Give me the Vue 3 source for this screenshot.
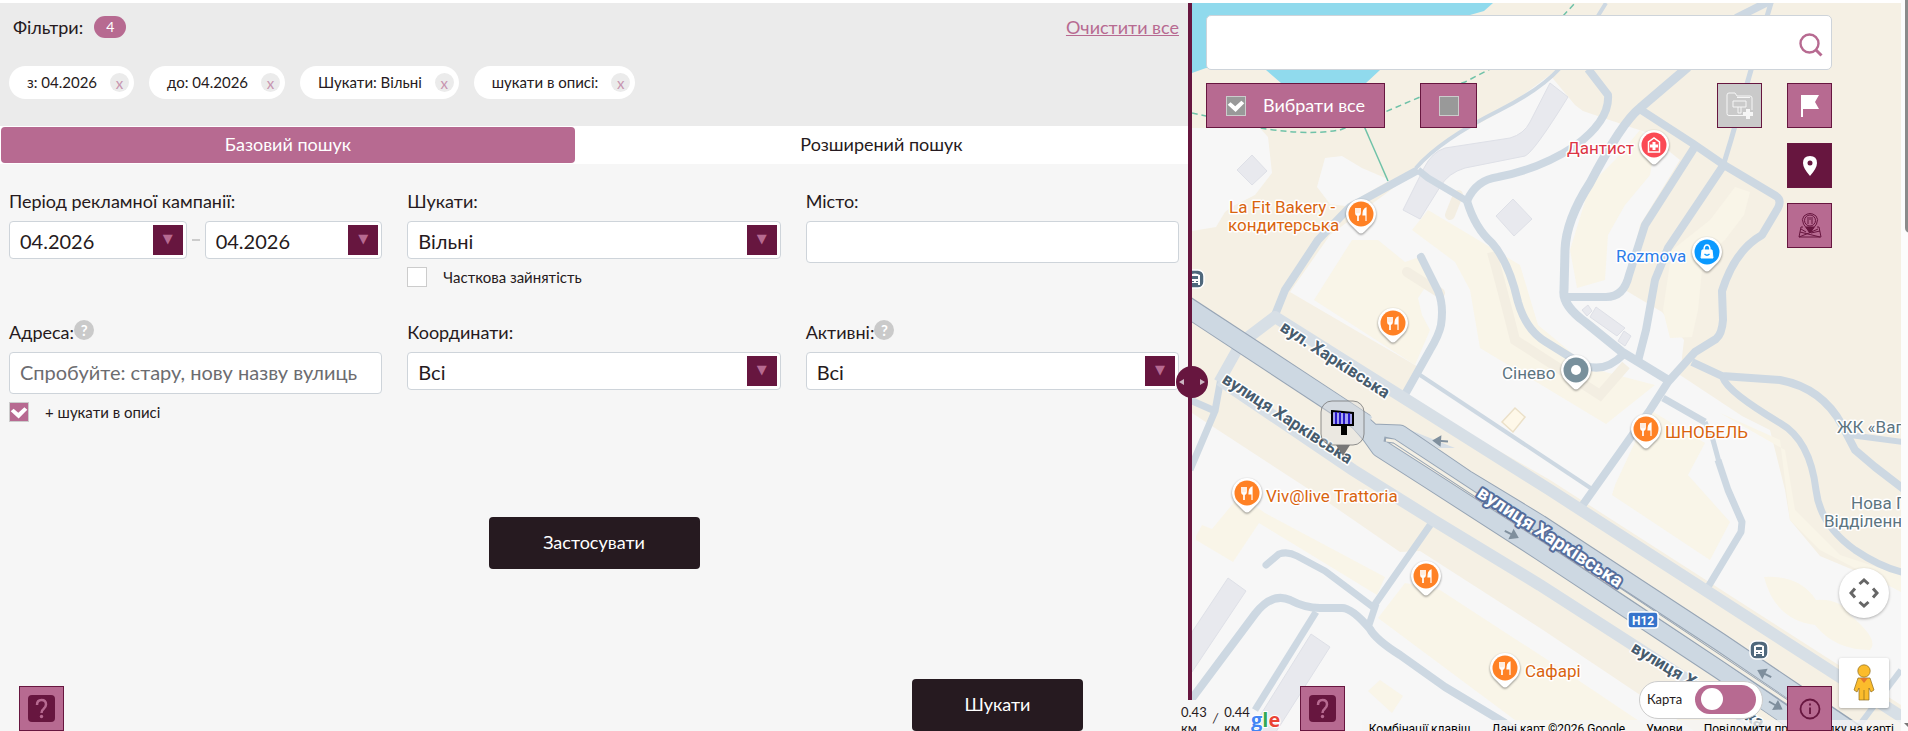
<script setup>
import { ref } from 'vue'

const chips = ref(['з: 04.2026', 'до: 04.2026', 'Шукати: Вільні', 'шукати в описі:'])
const tab = ref('basic')
const dateFrom = ref('04.2026')
const dateTo = ref('04.2026')
const status = ref('Вільні')
const partial = ref(false)
const city = ref('')
const address = ref('')
const inDescription = ref(true)
const coords = ref('Всі')
const active = ref('Всі')
const allChecked = ref(true)
const noneChecked = ref(false)
const mapSearch = ref('')
const mapOn = ref(false)

const roads = [
  { w: 8, d: 'M1275 315L1285 290L1318 240L1350 207L1418 170' },
  { w: 7, d: 'M1418 170L1428 178L1467 201' },
  { w: 8, d: 'M1467 201Q1476 180 1498 177Q1540 169 1575 146Q1610 120 1608 95L1588 69' },
  { w: 8, d: 'M1467 201Q1475 228 1492 243Q1509 262 1518 302Q1526 330 1546 342L1575 360Q1600 378 1624 354' },
  { w: 4, d: 'M1416 168Q1440 140 1500 110Q1540 90 1560 68L1580 45L1606 3' },
  { w: 8, cap: 'round', d: 'M1421 257L1438 291Q1444 305 1441 325Q1439 335 1430 350L1403 398' },
  { w: 4, d: 'M1420 375L1592 489' },
  { w: 9, d: 'M1688 67L1640 108Q1622 122 1590 183Q1566 220 1565 250L1564 290Q1562 305 1585 322L1622 352L1668 380' },
  { w: 8, d: 'M1638 108L1692 143L1724 165L1776 196Q1782 200 1778 208L1762 235Q1735 250 1722 291L1723 320Q1722 334 1716 339L1695 352L1668 382L1650 410L1582 506' },
  { w: 8, d: 'M1696 145L1645 225L1629 275Q1624 297 1606 297L1565 297' },
  { w: 8, d: 'M1725 163L1668 248L1655 280L1646 330L1638 361' },
  { w: 5, d: 'M1724 163L1731 140L1751 70L1771 3' },
  { w: 8, d: 'M1736 18L1772 0' },
  { w: 8, d: 'M1692 362L1722 376L1780 380Q1822 388 1842 425L1855 450L1875 467L1905 490' },
  { w: 6, d: 'M1850 435L1903 442' },
  { w: 7, d: 'M1723 378Q1728 392 1780 423Q1810 440 1816 490Q1820 525 1855 550Q1880 567 1905 573' },
  { w: 7, d: 'M1663 398L1705 422' },
  { w: 5, d: 'M1705 422L1713 440L1719 462' },
  { w: 7, d: 'M1718 460L1728 490L1742 522L1741 532L1705 592' },
  { w: 7, cap: 'round', d: 'M1266 565L1279 554Q1288 551 1297 556L1325 571L1373 607L1433 521' },
  { w: 7, d: 'M1376 604L1368 628' },
  { w: 8, d: 'M1190 701L1255 614Q1272 592 1290 600Q1305 608 1320 608L1342 608Q1352 608 1370 629Q1376 640 1400 655L1445 687L1505 723L1520 735' },
  { w: 7, d: 'M1316 612L1255 710' },
  { w: 7, d: 'M1190 400L1215 411' },
  { w: 7, d: 'M1221 378L1215 411L1190 470' },
  { w: 6, d: 'M1855 731L1901 670' }
]

const pins = [
  { x: 1361, y: 214, c: '#ff8125', t: 'food' },
  { x: 1393, y: 323, c: '#ff8125', t: 'food' },
  { x: 1646, y: 429, c: '#ff8125', t: 'food' },
  { x: 1247, y: 493, c: '#ff8125', t: 'food' },
  { x: 1426, y: 576, c: '#ff8125', t: 'food' },
  { x: 1505, y: 668, c: '#ff8125', t: 'food' },
  { x: 1654, y: 145, c: '#fb4a55', t: 'health' },
  { x: 1707, y: 252, c: '#0a99ff', t: 'shop' },
  { x: 1576, y: 370, c: '#78909c', t: 'dot' }
]

const labels = [
  { x: 1229, y: 213, k: 'food', s: 'La Fit Bakery -' },
  { x: 1228, y: 231, k: 'food', s: 'кондитерська' },
  { x: 1567, y: 154, k: 'health', s: 'Дантист' },
  { x: 1616, y: 262, k: 'shop', s: 'Rozmova' },
  { x: 1502, y: 379, k: 'place', s: 'Сінево' },
  { x: 1665, y: 438, k: 'food', s: 'ШНОБЕЛЬ' },
  { x: 1266, y: 502, k: 'food', s: 'Viv@live Trattoria' },
  { x: 1525, y: 677, k: 'food', s: 'Сафарі' },
  { x: 1837, y: 433, k: 'place', s: 'ЖК «Ваг' },
  { x: 1851, y: 509, k: 'place', s: 'Нова П' },
  { x: 1824, y: 527, k: 'place', s: 'Відділенн' }
]

const arrows = [
  { x: 1441, y: 441, r: 184 },
  { x: 1511, y: 534, r: 27 },
  { x: 1765, y: 674, r: 207 },
  { x: 1775, y: 705, r: 30 }
]
</script>

<template>
  <div class="page">
    <section class="filters">
      <header class="summary">
        <div class="summary-top">
          <span class="title">Фільтри:</span>
          <span class="count">4</span>
          <a class="clear" href="#">Очистити все</a>
        </div>
        <ul class="chips">
          <li v-for="chip in chips" :key="chip" class="chip">
            <span>{{ chip }}</span>
            <button type="button" class="chip-x">x</button>
          </li>
        </ul>
      </header>

      <nav class="tabs">
        <button type="button" class="tab" :class="{ on: tab === 'basic' }" @click="tab = 'basic'">Базовий пошук</button>
        <button type="button" class="tab wide" :class="{ on: tab === 'more' }" @click="tab = 'more'">Розширений пошук</button>
      </nav>

      <form class="form" @submit.prevent>
        <div class="grid">
          <div class="field">
            <label for="from">Період рекламної кампанії:</label>
            <div class="dates">
              <div class="select"><select id="from" v-model="dateFrom"><option>04.2026</option></select></div>
              <span class="dash"></span>
              <div class="select"><select v-model="dateTo" aria-label="Кінець періоду"><option>04.2026</option></select></div>
            </div>
          </div>
          <div class="field">
            <label for="status">Шукати:</label>
            <div class="select"><select id="status" v-model="status"><option>Вільні</option></select></div>
            <label class="check"><input v-model="partial" type="checkbox">Часткова зайнятість</label>
          </div>
          <div class="field">
            <label for="city">Місто:</label>
            <input id="city" v-model="city" class="text" type="text">
          </div>
          <div class="field">
            <div class="label-row"><label for="address">Адреса:</label><span class="hint">?</span></div>
            <input id="address" v-model="address" class="text" type="text" placeholder="Спробуйте: стару, нову назву вулиць">
            <label class="check"><input v-model="inDescription" type="checkbox">+ шукати в описі</label>
          </div>
          <div class="field">
            <label for="coords">Координати:</label>
            <div class="select"><select id="coords" v-model="coords"><option>Всі</option></select></div>
          </div>
          <div class="field">
            <div class="label-row"><label for="active">Активні:</label><span class="hint">?</span></div>
            <div class="select"><select id="active" v-model="active"><option>Всі</option></select></div>
          </div>
        </div>
        <button type="button" class="dark apply">Застосувати</button>
        <div class="bottom">
          <button type="button" class="sq" aria-label="Довідка">
            <svg width="27" height="27" viewBox="0 0 27 27"><rect width="27" height="27" rx="4" fill="#67163f" /><path d="M9 10Q9 5 13.500 5Q18 5 18 9.500Q18 12 15.500 14Q13.500 15.500 13.500 18" fill="none" stroke="#b76a91" stroke-width="2.500" /><circle cx="13.500" cy="21.500" r="1.700" fill="#b76a91" /></svg>
          </button>
          <button type="submit" class="dark search">Шукати</button>
        </div>
      </form>
    </section>

    <div class="divider">
      <button type="button" class="handle" aria-label="Змінити ширину">
        <svg width="32" height="32" viewBox="0 0 32 32" fill="#cbb5c1"><path d="M8 13v6l-5-3zM24 13v6l5-3z" /></svg>
      </button>
    </div>

    <section class="map">
      <svg class="canvas" viewBox="1192 3 709 728" preserveAspectRatio="xMinYMin slice">
        <rect x="1192" y="3" width="709" height="728" fill="#f5f0e4" />
        <path d="M1192 3H1493L1484 11L1470 15L1380 70L1366 83H1281L1266 70L1206 68L1192 73Z" fill="#90daed" />
        <g fill="#f7f7f7">
          <path d="M1192 128H1260L1268 137L1272 173L1255 195L1233 206L1225 212L1216 227L1192 231Z" />
          <path d="M1325 158L1342 156L1362 168L1390 180L1345 206L1330 204L1317 187Z" />
          <path d="M1290 292L1330 235L1415 172L1440 145L1500 112L1550 75L1575 105L1583 111L1645 132L1680 160L1640 225L1625 290L1662 312L1684 340L1680 375L1742 416L1770 430L1785 490L1790 520L1820 556L1901 590V705L1550 480L1405 397L1420 368Z" />
          <path d="M1192 413L1310 490L1400 552L1420 551L1540 628L1700 735H1192Z" />
        </g>
        <g fill="#f9f5e8">
          <path d="M1314 300L1352 240H1378L1405 262L1425 255L1430 280L1418 298L1422 315L1430 330L1415 365Z" />
          <path d="M1412 230L1428 210L1470 235L1520 265L1538 325L1590 368L1655 385L1606 424L1480 348L1470 290L1455 262Z" />
          <path d="M1590 185L1615 160L1640 130L1655 145L1650 175L1625 205L1608 235L1605 280L1577 288L1570 250Z" />
          <path d="M1710 220L1735 187L1750 192L1744 215L1725 240L1703 260L1698 310L1692 337L1670 338L1663 310L1672 250Z" />
          <path d="M1615 485L1650 410L1705 443L1688 475L1730 522L1710 560L1612 495Z" />
          <path d="M1720 413L1780 440L1790 520L1820 550L1901 592V575L1840 555L1795 510L1785 450Z" />
          <path d="M1764 577Q1800 575 1816 600Q1840 598 1850 615Q1880 640 1870 650Q1835 650 1815 625Q1775 620 1764 577Z" />
          <path d="M1196 536L1202 525L1212 529L1240 495L1265 513L1385 577L1377 595L1259 523L1233 562L1196 540Z" />
          <path d="M1378 618L1405 583L1440 590L1560 668L1660 735H1535Z" />
          <path d="M1368 691L1380 680L1403 696L1392 713Z" />
        </g>
        <g fill="none" stroke="#f3eee2" stroke-width="10">
          <path d="M1492 252Q1505 300 1515 340L1600 395L1626 365" />
          <path d="M1407 272L1440 293M1458 195L1450 215" stroke-linecap="round" />
        </g>
        <g fill="#e8e9ee" stroke="#dee0e7">
          <path d="M1403 210L1420 219L1440 187Q1448 173 1465 168L1525 156Q1534 152 1568 97L1550 83L1530 122Q1524 134 1510 138L1445 148Q1432 152 1424 168Z" />
          <path d="M1237 170L1252 155L1267 171L1252 185ZM1496 216L1513 199L1532 219L1514 236Z" />
          <path d="M1596 307L1625 328L1617 336L1590 317ZM1588 305L1592 311L1587 316L1582 310ZM1624 331L1631 336L1625 346L1618 341Z" />
          <path d="M1228 578L1246 591L1192 672V632ZM1311 634L1330 647L1274 735H1248Z" />
        </g>
        <path d="M1515 408L1525 417L1513 432L1502 422Z" fill="#fef8e9" stroke="#ebe0c8" stroke-width="1.500" />
        <g fill="none" stroke="#6fc2a8" stroke-width="1.500">
          <path d="M1192 113Q1215 118 1240 124Q1300 137 1340 130L1385 112L1420 97L1465 82L1492 68M1563 16L1575 3" stroke-dasharray="6 4" />
          <path d="M1364 126L1388 181" />
        </g>

        <g fill="none" stroke="#cdd8e2" stroke-linejoin="round">
          <path v-for="r in roads" :key="r.d" :d="r.d" :stroke-width="r.w" :stroke-linecap="r.cap || 'butt'" />
        </g>

        <g fill="none" stroke="#d7dfe6">
          <path d="M1238 345L1275 317L1407 400L1550 490L1905 719" stroke-width="12" stroke-linejoin="round" />
          <path d="M1220 380L1353 470L1433 520L1540 585L1700 688L1770 735" stroke-width="12" />
          <path d="M1237 350L1219 382" stroke-width="11" />
        </g>
        <path d="M1405 428L1455 448L1438 448Z" fill="#d7dfe6" />
        <g fill="none" stroke="#97a5b5">
          <path d="M1186 306L1365 424" stroke-width="21" />
          <path d="M1360 422L1372 433L1400 434L1466 479L1540 524L1720 642L1855 733" stroke-width="19" stroke-linejoin="round" />
          <path d="M1358 420L1370 434L1380 448L1430 480L1540 551L1720 670L1815 735" stroke-width="19" stroke-linejoin="round" />
        </g>
        <g fill="none" stroke="#cdd8e2">
          <path d="M1184 305L1367 425" stroke-width="19" />
          <path d="M1358 420L1372 433L1400 434L1466 479L1540 524L1720 642L1857 735" stroke-width="17" stroke-linejoin="round" />
          <path d="M1356 419L1370 434L1380 448L1430 480L1540 551L1720 670L1817 737" stroke-width="17" stroke-linejoin="round" />
        </g>
        <path d="M1384 439L1394 441L1540 537L1720 657L1838 736" fill="none" stroke="#97a5b5" stroke-width="5" />
        <path d="M1386 440L1394 441L1540 537L1720 657L1838 736" fill="none" stroke="#f3efe4" stroke-width="3" />

        <g class="road-name">
          <text transform="translate(1279 330) rotate(33)">вул. Харківська</text>
          <text transform="translate(1221 382) rotate(33)">вулиця Харківська</text>
          <text transform="translate(1630 651) rotate(31)">вулиця Харківська</text>
        </g>
        <text class="road-name trunk" transform="translate(1476 496) rotate(33)">вулиця Харківська</text>

        <g v-for="a in arrows" :key="a.x" :transform="`translate(${a.x} ${a.y}) rotate(${a.r})`">
          <path d="M-7 0H3M1 -4L7 0L1 4Z" fill="#7f8f9d" stroke="#7f8f9d" stroke-width="2" />
        </g>

        <g v-for="b in [{ x: 1195, y: 279 }, { x: 1759, y: 650 }]" :key="b.x" :transform="`translate(${b.x} ${b.y})`">
          <rect x="-9" y="-9" width="18" height="18" rx="6" fill="#4f687c" stroke="#fff" stroke-width="1.500" />
          <path fill-rule="evenodd" d="M-5 -4Q0 -7 5 -4V6H3V4H-3V6H-5ZM-3 -3V0H3V-3ZM-3 2H-1V3H-3ZM1 2H3V3H1Z" fill="#fff" />
        </g>
        <rect x="1628" y="612" width="30" height="16" rx="3" fill="#3674cc" stroke="#fff" stroke-width="1.500" />
        <text class="shield" x="1632" y="625">H12</text>

        <g v-for="p in pins" :key="p.x + '-' + p.y" class="pin" :transform="`translate(${p.x} ${p.y})`">
          <path d="M-15 0A15 15 0 1 1 15 0Q15 7 8 13L3 18Q0 21 -3 18L-8 13Q-15 7 -15 0Z" fill="#fff" />
          <circle r="12.500" :fill="p.c" />
          <g v-if="p.t === 'food'" fill="none" stroke="#fff">
            <path d="M-5 -6V-1Q-5 1 -3 1Q-1 1 -1 -1V-6M-3 -6V7" stroke-width="1.700" />
            <path d="M5 7V-6Q2 -5 2 1H5Z" fill="#fff" stroke-width="1.200" />
          </g>
          <g v-else-if="p.t === 'health'" fill="none" stroke="#fff">
            <path d="M-5.500 7V-3L0 -7L5.500 -3V7Z" stroke-width="1.500" />
            <path d="M0 -3V5M-4 1H4" stroke-width="3" />
          </g>
          <g v-else-if="p.t === 'shop'">
            <path d="M-5 -2H5L6 6H-6Z" fill="#fff" stroke="#fff" />
            <path d="M-3 -2Q-3 -7 0 -7Q3 -7 3 -2" fill="none" stroke="#fff" stroke-width="1.500" />
            <path d="M-2.500 2Q0 4.500 2.500 2" fill="none" stroke="#0a99ff" stroke-width="1.300" />
          </g>
          <circle v-else r="5" fill="#fff" />
        </g>

        <text v-for="l in labels" :key="l.s" class="poi" :class="l.k" :x="l.x" :y="l.y">{{ l.s }}</text>

        <path d="M1336 445H1350L1343 456Z" fill="#777" />
        <rect x="1321" y="401" width="43" height="44" rx="11" fill="#ddd" fill-opacity=".4" stroke="#777" stroke-opacity=".8" />
        <path d="M1332 411L1353 413V425H1332Z" fill="#a5a3f0" stroke="#000" stroke-width="2" />
        <path d="M1336 412V424M1340 412V424M1344 413V424M1349 413V424" stroke="#2a19c8" stroke-width="2" />
        <rect x="1341" y="426" width="6" height="9" />

        <text class="logo" x="1251" y="727"><tspan fill="#4285f4">g</tspan><tspan fill="#34a853">l</tspan><tspan fill="#ea4335">e</tspan></text>
      </svg>

      <div class="overlay">
        <div class="search-box">
          <input v-model="mapSearch" type="text" aria-label="Пошук на карті">
          <svg width="24" height="24" viewBox="0 0 24 24" fill="none" stroke="#b76a91" stroke-width="2.400"><circle cx="10.500" cy="10.500" r="9" /><path d="M16.500 16.500L22.500 22.500" stroke-width="3" /></svg>
        </div>
        <div class="tools">
          <label class="tool all"><input v-model="allChecked" type="checkbox"><span>Вибрати все</span></label>
          <label class="tool one"><input v-model="noneChecked" type="checkbox" aria-label="Зняти вибір"></label>
          <button type="button" class="sq folder" aria-label="Додати до папки">
            <svg width="28" height="28" viewBox="0 0 28 28" fill="none" stroke="#f6f6f6"><path d="M19 23.500H3Q1 23.500 1 21.500V3Q1 1 3 1H9L11 4H24Q26 4 26 6V18M11 5.500H24" /><path d="M7 9H20V15H7ZM12 15V21H15V15" /><path d="M22 17V27M17 22H27" stroke-width="4" /></svg>
          </button>
          <div class="stack">
            <button type="button" class="sq" aria-label="Прапорець">
              <svg width="20" height="24" viewBox="0 0 20 24"><path d="M1 1H19L15 8L19 15H3V23H1Z" fill="#fff" /></svg>
            </button>
            <button type="button" class="sq solid" aria-label="Мітка">
              <svg width="16" height="22" viewBox="0 0 16 22"><path fill-rule="evenodd" d="M8 1Q15 1 15 8Q15 13 8 21Q1 13 1 8Q1 1 8 1ZM8 5.500A2.500 2.500 0 1 0 8 10.500A2.500 2.500 0 1 0 8 5.500Z" fill="#fff" /></svg>
            </button>
            <button type="button" class="sq" aria-label="Область">
              <svg width="26" height="27" viewBox="0 0 26 27" fill="none" stroke="#67163f"><path d="M6 15H4L2 25H24L22 15H20M3 20L23 25M2 25L12 21L21 17M14 21L23 19M4 17L9 20" /><path d="M13 21L6.500 12Q4 7 7 4Q13 -1 19 4Q22 7 19.500 12Z" /><circle cx="13" cy="8.500" r="5.500" /><path d="M11 5V12M13 5V8M15 5V12" /><path d="M9 15L13 21L17 15Z" fill="#67163f" /></svg>
            </button>
          </div>
        </div>
      </div>

      <div class="scale"><span>0.43<br>км</span><i>/</i><span>0.44<br>км</span></div>
      <button type="button" class="sq map-help" aria-label="Довідка карти">
        <svg width="27" height="27" viewBox="0 0 27 27"><rect width="27" height="27" rx="4" fill="#67163f" /><path d="M9 10Q9 5 13.500 5Q18 5 18 9.500Q18 12 15.500 14Q13.500 15.500 13.500 18" fill="none" stroke="#b76a91" stroke-width="2.500" /><circle cx="13.500" cy="21.500" r="1.700" fill="#b76a91" /></svg>
      </button>
      <footer class="credits">
        <span>Комбінації клавіш</span><span>Дані карт ©2026 Google</span><a href="#">Умови</a><a href="#">Повідомити про помилку на карті</a>
      </footer>
      <label class="toggle">Карта<input v-model="mapOn" type="checkbox" role="switch"></label>
      <button type="button" class="sq info" aria-label="Інформація">
        <svg width="22" height="22" viewBox="0 0 22 22" fill="none" stroke="#67163f" stroke-width="1.800"><circle cx="11" cy="11" r="9.500" /><path d="M11 9.500V16M11 5.500V7.500" /></svg>
      </button>
      <button type="button" class="camera" aria-label="Керування камерою">
        <svg width="30" height="30" viewBox="0 0 30 30" fill="none" stroke="#666" stroke-width="3"><path d="M10.500 6L15 2L19.500 6M10.500 24L15 28L19.500 24M6 10.500L2 15L6 19.500M24 10.500L28 15L24 19.500" /></svg>
      </button>
      <button type="button" class="pegman" aria-label="Перегляд вулиць">
        <svg width="22" height="38" viewBox="0 0 22 38" fill="#fbbc2c" stroke="#8c6a1c" stroke-width=".7"><path d="M5 14H17L21 26L18 28L16 24V36H6V24L4 28L1 26Z" /><circle cx="11" cy="7" r="6.200" /><path d="M7 14L11 19L15 14Z" fill="#e5782b" stroke="none" /><path d="M11 26V36" /></svg>
      </button>
    </section>
    <div class="scrollbar"><span></span><i></i></div>
  </div>
</template>

<style>
body { margin: 0; overflow: hidden; background: #fff; }
</style>

<style scoped>
* { box-sizing: border-box; }
.page {
  display: flex; height: 100vh; padding-top: 3px; overflow: hidden;
  font-family: Lato, "Open Sans", sans-serif; font-size: 18px; line-height: 24px; color: #261a20;
}
button, input, select { font: inherit; color: inherit; margin: 0; }
button { cursor: pointer; padding: 0; border: 0; }
.filters { flex: 1188 1 0; min-width: 0; display: flex; flex-direction: column; background: #f6f6f6; }
.summary { padding: 11px 9px 27px; background: #ebebeb; }
.summary-top { display: flex; align-items: center; height: 26px; }
.title { padding-left: 4px; margin-right: 11px; }
.count { width: 32px; height: 22px; line-height: 22px; border-radius: 11px; background: #b76a91; color: #fff; font-size: 14px; text-align: center; }
.clear { margin-left: auto; color: #b76a91; }
.chips { display: flex; gap: 15px; margin: 26px 0 0; padding: 0; list-style: none; }
.chip { display: flex; align-items: center; gap: 13px; height: 33px; padding: 0 5px 0 18px; border-radius: 17px; background: #fff; font-size: 15px; }
.chip span { padding-bottom: 2px; }
.chip-x { width: 19px; height: 19px; border-radius: 50%; background: #ebebeb; color: #c795b0; line-height: 16px; }
.tabs { display: flex; height: 38px; padding: 1px 0 1px 1px; background: #fff; }
.tab { flex: 574 1 0; padding-bottom: 2px; border-radius: 4px; background: transparent; }
.tab.wide { flex-grow: 613; }
.tab.on { background: #b76a91; color: #fff; }
.form { flex: 1; display: flex; flex-direction: column; padding: 25px 9px 0; }
.grid { display: grid; grid-template-columns: repeat(3, 1fr); gap: 29px 25px; }
.field { display: flex; flex-direction: column; align-items: stretch; min-height: 102px; }
.field > label:first-child, .label-row { height: 24px; margin-bottom: 8px; }
.label-row { display: flex; }
.hint { width: 20px; height: 20px; border-radius: 50%; background: #cacaca; color: #fff; font-size: 15px; font-weight: 700; line-height: 20px; text-align: center; }
.dates { display: flex; align-items: center; gap: 5px; }
.dates .select { flex: 1; }
.dash { width: 8px; height: 2px; background: #ccc; }
.select { position: relative; height: 38px; }
.select select { width: 100%; height: 38px; padding: 2px 40px 0 10px; appearance: none; border: 1px solid #ced4da; border-radius: 4px; background: #fff; font-size: 20px; }
.select::after { content: "▼"; position: absolute; top: 4px; right: 4px; width: 30px; height: 30px; line-height: 28px; background: #67163f; color: #b76a91; font-family: "DejaVu Sans", sans-serif; font-size: 13px; text-align: center; pointer-events: none; }
.text { width: 100%; height: 42px; padding: 0 10px 2px; border: 1px solid #ced4da; border-radius: 4px; background: #fff; font-size: 20px; }
.text::placeholder { color: #6c6c70; opacity: 1; }
.check { display: flex; align-items: center; gap: 16px; margin-top: 8px; font-size: 15px; line-height: 20px; }
input[type="checkbox"] { appearance: none; flex: none; width: 20px; height: 20px; border: 1px solid #ccc; background: #fff; }
input[type="checkbox"]:checked { background: #b76a91; }
input[type="checkbox"]:checked::before { content: ""; display: block; height: 18px; background: #fff; clip-path: polygon(4% 46%, 20% 32%, 46% 54%, 80% 24%, 96% 38%, 48% 86%); }
.dark { border-radius: 4px; background: #261a20; color: #fff; height: 52px; padding-bottom: 2px; }
.apply { align-self: center; width: 211px; margin-top: 95px; margin-bottom: 20px; }
.bottom { display: flex; align-items: flex-end; justify-content: space-between; margin-top: auto; padding: 0 96px 0 10px; }
.search { width: 171px; }
.sq { display: flex; align-items: center; justify-content: center; width: 45px; height: 45px; border: 1px solid #67163f; background: #b76a91; }
.divider { position: relative; flex: none; width: 4px; margin-bottom: 31px; background: #67163f; }
.handle { position: absolute; z-index: 3; top: 363px; left: -12px; width: 32px; height: 32px; border-radius: 50%; background: #67163f; }
.handle svg { display: block; }
.map { position: relative; flex: 709 1 0; min-width: 0; background: #f7f7f7; }
.canvas { position: absolute; inset: 0; width: 100%; height: 100%; font-family: Roboto, sans-serif; }
.pin { filter: drop-shadow(0 1px 1px rgba(0, 0, 0, .45)); }
.poi { font-size: 17px; fill: #5c7480; stroke: #fff; stroke-width: 3px; stroke-linejoin: round; paint-order: stroke; }
.poi.food { fill: #d9640f; }
.poi.health { fill: #dc3545; }
.poi.shop { fill: #2b7de9; }
.road-name { font-size: 17px; font-weight: 700; fill: #475c6e; stroke: #fff; stroke-width: 3px; stroke-linejoin: round; paint-order: stroke; }
.trunk { font-size: 19px; fill: #fff; stroke: #566e9c; stroke-width: 4px; }
.shield { font-size: 12px; font-weight: 700; fill: #fff; }
.logo { font-family: "Open Sans", sans-serif; font-size: 20px; font-weight: 700; stroke: #fff; stroke-width: 2px; paint-order: stroke; }
.overlay { position: relative; padding: 12px 69px 0 14px; }
.search-box { position: relative; }
.search-box input { display: block; width: 100%; height: 55px; padding: 0 50px 0 12px; border: 1px solid #ced4da; border-radius: 5px; background: #fff; }
.search-box svg { position: absolute; top: 18px; right: 9px; }
.tools { display: flex; align-items: flex-start; margin-top: 13px; }
.tool { display: flex; align-items: center; justify-content: center; gap: 17px; height: 45px; border: 1px solid #67163f; background: #b76a91; color: #fff; }
.tool span { padding-bottom: 2px; }
.tool input[type="checkbox"] { background: #999; }
.all { width: 179px; margin-right: 35px; }
.one { width: 57px; }
.folder { margin-left: auto; margin-right: 25px; background: #cacaca; }
.stack { display: flex; flex-direction: column; gap: 15px; }
.solid { background: #67163f; }
.scale { position: absolute; z-index: 2; left: -13px; bottom: -9px; display: flex; gap: 6px; width: 72px; height: 40px; padding: 4px 2px; background: #f6f6f6; font-size: 13px; line-height: 16px; }
.scale i { padding-top: 6px; }
.map-help { position: absolute; z-index: 2; left: 108px; bottom: 0; }
.info { position: absolute; z-index: 2; right: 69px; bottom: 0; }
.credits { position: absolute; right: 0; bottom: -3px; display: flex; gap: 21px; height: 14px; padding: 0 7px; background: rgba(245, 245, 245, .75); font-family: Roboto, sans-serif; font-size: 12px; line-height: 18px; color: #000; white-space: nowrap; }
.credits a { color: inherit; text-decoration: none; }
.toggle { position: absolute; z-index: 2; right: 138px; bottom: 12px; display: flex; align-items: center; justify-content: space-between; width: 124px; height: 38px; padding: 0 6px 2px 7px; border: 1px solid #ccc; border-radius: 19px; background: #fff; font-size: 13px; }
.toggle input[type="checkbox"] { width: 61px; height: 29px; padding: 3px 6px; border: 0; border-radius: 15px; background: #b76a91; }
.toggle input[type="checkbox"]::before { content: ""; display: block; width: 22px; height: 22px; border-radius: 50%; background: #fff; clip-path: none; }
.camera, .pegman { position: absolute; z-index: 2; right: 12px; display: flex; align-items: center; justify-content: center; width: 50px; height: 50px; background: #fff; box-shadow: 0 1px 3px rgba(0, 0, 0, .3); }
.camera { bottom: 113px; border-radius: 50%; }
.pegman { bottom: 23px; border-radius: 2px; }
.scrollbar { position: relative; flex: none; width: 7px; margin-top: -3px; background: #fcfcfc; overflow: hidden; }
.scrollbar span { position: absolute; top: -10px; left: 4px; width: 10px; height: 243px; border-radius: 5px; background: #8b8b8b; }
.scrollbar i { position: absolute; left: 3px; bottom: 4px; border: 4px solid transparent; border-top-color: #777; border-bottom: 0; }
</style>
